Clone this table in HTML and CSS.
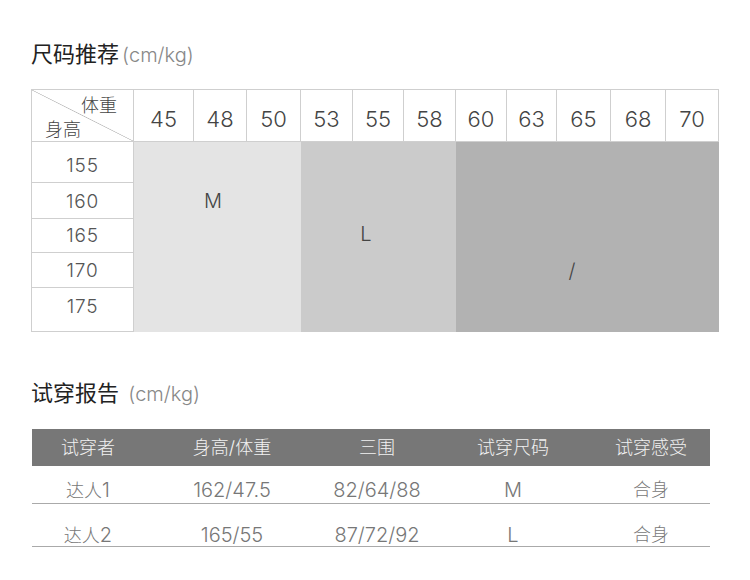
FILE: index.html
```html
<!DOCTYPE html>
<html lang="zh-CN">
<head>
<meta charset="utf-8">
<title>尺码推荐</title>
<link rel="stylesheet" href="styles.css">
</head>
<body>
<div class="page">
  <h2 class="title title-size">尺码推荐<span class="unit">(cm/kg)</span></h2>
  <div class="size-grid">
    <div class="corner"><span class="corner-w">体重</span><span class="corner-h">身高</span></div>
    <div class="hcell">45</div>
    <div class="hcell">48</div>
    <div class="hcell">50</div>
    <div class="hcell">53</div>
    <div class="hcell">55</div>
    <div class="hcell">58</div>
    <div class="hcell">60</div>
    <div class="hcell">63</div>
    <div class="hcell">65</div>
    <div class="hcell">68</div>
    <div class="hcell">70</div>
    <div class="label">155</div>
    <div class="label">160</div>
    <div class="label">165</div>
    <div class="label">170</div>
    <div class="label label-last">175</div>
    <div class="block block-m">M</div>
    <div class="block block-l">L</div>
    <div class="block block-x">/</div>
  </div>

  <h2 class="title title-report">试穿报告 <span class="unit">(cm/kg)</span></h2>
  <div class="report">
    <div class="rrow rhead">
      <div>试穿者</div><div>身高/体重</div><div>三围</div><div>试穿尺码</div><div>试穿感受</div>
    </div>
    <div class="rrow rdata r1">
      <div>达人<span class="num">1</span></div><div class="num">162/47.5</div><div class="num">82/64/88</div><div class="num">M</div><div>合身</div>
    </div>
    <div class="rrow rdata r2">
      <div>达人<span class="num">2</span></div><div class="num">165/55</div><div class="num">87/72/92</div><div class="num">L</div><div>合身</div>
    </div>
  </div>
</div>
</body>
</html>
```
FILE: styles.css
```css
* { box-sizing: border-box; }
html, body { margin: 0; padding: 0; background: #fff; }
body {
  width: 750px;
  height: 580px;
  overflow: hidden;
  font-family: Inter, "Noto Sans CJK SC", sans-serif;
  font-weight: 300;
}
.page { padding: 39px 0 0 31px; }

.title {
  margin: 0;
  font-weight: normal;
  color: #222;
  line-height: 30px;
  font-size: 22px;
}
.title-size { margin-bottom: 19px; }
.title-report { margin-top: 46px; margin-bottom: 20px; }
.unit { color: #888; font-size: 20px; font-weight: 300; margin-left: 3px; }

.size-grid {
  display: grid;
  grid-template-columns: 103px 60px 53px 54px 52px 51px 52px 51px 50px 54px 55px 53px;
  grid-template-rows: 53px 41px 36px 34px 35px 44px;
  width: 688px;
}
.corner, .hcell, .label {
  border-right: 1px solid #cfcfcf;
  border-bottom: 1px solid #cfcfcf;
}
.hcell, .corner { border-top: 1px solid #cfcfcf; }
.corner, .label { border-left: 1px solid #cfcfcf; }

.corner {
  background: linear-gradient(to top right, transparent calc(50% - 0.7px), #bdbdbd 50%, transparent calc(50% + 0.7px));
  display: flex;
  flex-direction: column;
  font-size: 18px;
  color: #444;
  line-height: 20px;
  padding: 6px 16px 0 13px;
}
.corner-w { align-self: flex-end; }
.corner-h { align-self: flex-start; margin-top: 4px; }

.hcell {
  font-size: 22px;
  color: #444;
  text-align: center;
  padding-top: 17px;
  line-height: 24px;
}
.label {
  grid-column: 1;
  font-size: 19px;
  letter-spacing: 0.8px;
  color: #555;
  display: flex;
  align-items: flex-end;
  justify-content: center;
  padding-bottom: 6px;
  line-height: 20px;
}
.label-last { padding-bottom: 14px; }
.block {
  grid-row: 2 / span 5;
  font-size: 20px;
  color: #444;
  text-align: center;
  line-height: 20px;
}
.block-m { grid-column: 2 / 5; background: #e4e4e4; padding: 49px 9px 0 0; }
.block-l { grid-column: 5 / 8; background: #cbcbcb; padding: 82px 25px 0 0; }
.block-x { grid-column: 8 / 13; background: #b2b2b2; padding: 119px 31px 0 0; }

.report { width: 678px; margin-left: 1px; }
.rrow {
  display: grid;
  grid-template-columns: 112px 176px 114px 158px 118px;
  text-align: center;
  font-size: 18px;
  line-height: 20px;
}
.rhead {
  background: #777;
  color: #f2f2f2;
  height: 37px;
  align-items: center;
}
.rdata { color: #777; border-bottom: 1px solid #aaa; }
.num { font-size: 20px; }
.r1 { height: 38px; padding-top: 14px; }
.r2 { height: 43px; padding-top: 21px; }
```
